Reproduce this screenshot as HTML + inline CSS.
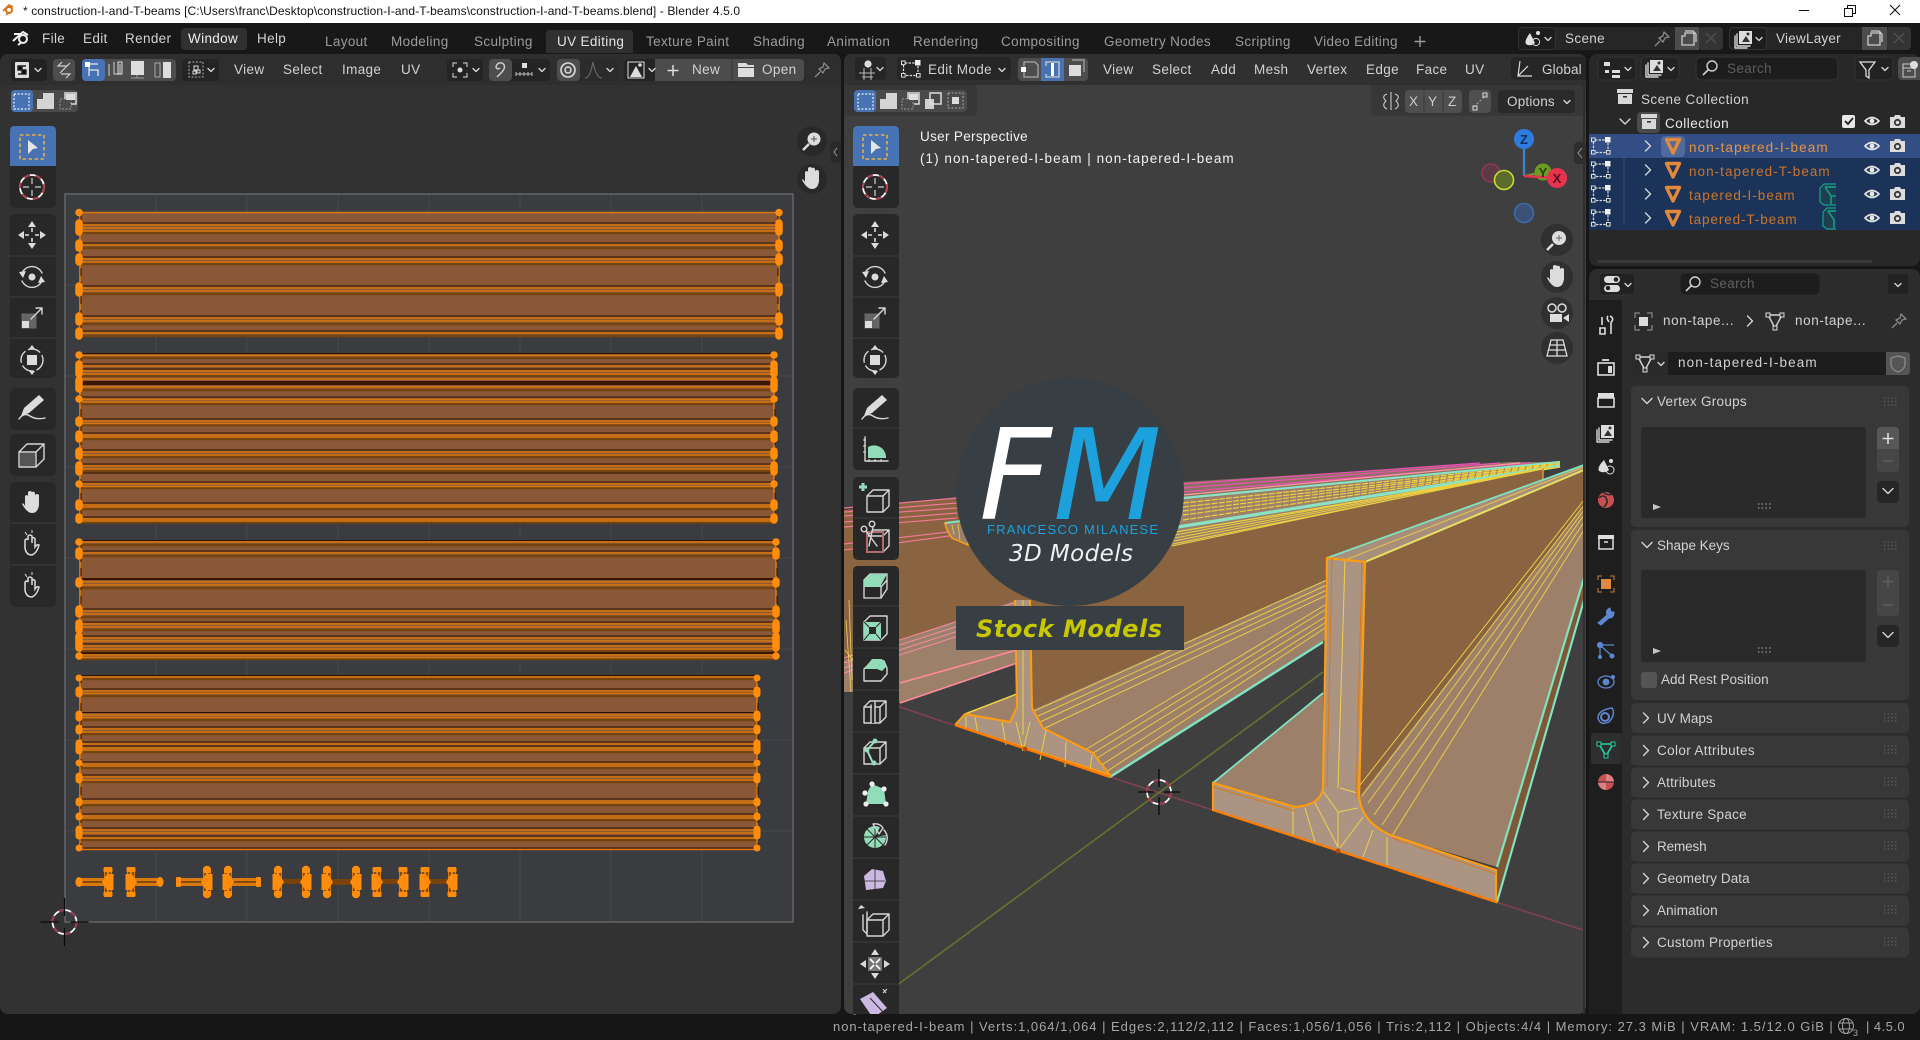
<!DOCTYPE html>
<html><head><meta charset="utf-8"><title>Blender 4.5.0</title>
<style>
html,body{margin:0;padding:0;background:#161616;overflow:hidden}
svg{display:block}
text{font-family:"Liberation Sans",sans-serif;font-size:13.5px;letter-spacing:.35px;fill:#d2d2d2}
.tab{fill:#9c9c9c}
.g{fill:#b8b8b8}
.sm{font-size:13px}
.dv{font-family:"DejaVu Sans",sans-serif;letter-spacing:0}
.ic{fill:none;stroke:#d6d6d6;stroke-width:1.4;stroke-linejoin:round;stroke-linecap:round}
.w{fill:#dcdcdc;stroke:none}
.m{fill:#93dcba;stroke:none}
</style></head><body>
<svg width="1920" height="1040" viewBox="0 0 1920 1040" xmlns="http://www.w3.org/2000/svg">
<defs>
<clipPath id="vp"><rect x="844" y="85" width="741" height="930"/></clipPath>
<clipPath id="tb"><rect x="850" y="120" width="60" height="894"/></clipPath>
<g id="dn"><path d="M-3 -1.5L0 1.5L3 -1.5" class="ic"/></g>
<g id="rt"><path d="M-2.5 -5L2.5 0L-2.5 5" class="ic"/></g>
<g id="dnb"><path d="M-5 -2.5L0 2.5L5 -2.5" class="ic"/></g>
<g id="tri"><path d="M-6.5 -6.5H6.5L0 7Z" fill="none" stroke="#e0893a" stroke-width="3.4" stroke-linejoin="round"/></g>
<g id="eye"><path d="M-7 0Q0 -7 7 0Q0 7 -7 0Z" fill="none" stroke="#e8e8e8" stroke-width="1.6"/><circle r="2.4" fill="#e8e8e8"/></g>
<g id="cam"><path d="M-7 -5H-3L-2 -7H3L4 -5H8V6H-7Z" fill="#dcdcdc"/><circle cx=".5" cy=".5" r="3.6" fill="#333"/><circle cx=".5" cy=".5" r="1.8" fill="#dcdcdc"/></g>
<g id="mode"><path d="M-6 -6H4M-7.5 -4V4M-5 6.5H5M7 -3V4" fill="none" stroke="#dcdcdc" stroke-width="1.2" stroke-dasharray="2.4 1.2"/><rect x="4" y="-9" width="5.5" height="5.5" fill="#f0f0f0"/><rect x="-9.5" y="-8" width="3.6" height="3.6" fill="none" stroke="#dcdcdc" stroke-width="1"/><rect x="-9.5" y="4.5" width="3.6" height="3.6" fill="none" stroke="#dcdcdc" stroke-width="1"/><rect x="5.5" y="4.5" width="3.6" height="3.6" fill="none" stroke="#dcdcdc" stroke-width="1"/></g>
<g id="coll"><rect x="-8" y="-8" width="16" height="4" fill="#d8d8d8"/><path d="M-7 -3H7V7H-7Z" fill="#d8d8d8"/><rect x="-2" y="-1" width="4" height="1.6" fill="#333"/></g>
<g id="meshd"><path d="M-7 -6H7L0 7Z" class="ic"/><rect x="-9" y="-8" width="4" height="4" fill="#333" stroke="#ddd"/><rect x="5" y="-8" width="4" height="4" fill="#333" stroke="#ddd"/><rect x="-2" y="5" width="4" height="4" fill="#333" stroke="#ddd"/></g>
<g id="pin"><path d="M2 -7L7 -2L3 -1L1 3L-3 -1L1 -3ZM-2 2L-7 7" fill="none" stroke="#8a8a8a" stroke-width="1.3" stroke-linejoin="round"/></g>
<g id="search"><circle cx="2" cy="-2" r="5" fill="none" stroke="#cfcfcf" stroke-width="1.4"/><path d="M-1.5 1.5L-7 7" stroke="#cfcfcf" stroke-width="1.6"/></g>
<g id="vlayer"><rect x="-5" y="-8" width="13" height="13" fill="#ddd"/><path d="M-2 3L2 -3L6 3Z" fill="#333"/><circle cx="4" cy="-5" r="1.5" fill="#333"/><path d="M-7 -5V7H6M-9 -3V9H3" class="ic"/></g>
<g id="sel"><rect x="-12" y="-12" width="24" height="24" fill="none" stroke="#e8b04a" stroke-width="1.6" stroke-dasharray="3.5 2.5"/><path d="M-4 -7L6 1L1 2L-4 7Z" fill="#e6e6e6"/></g>
<g id="cur"><circle r="12" fill="none" stroke="#fff" stroke-width="1.8"/><circle r="12" fill="none" stroke="#b03a4a" stroke-width="1.8" stroke-dasharray="6 6"/><path d="M0 -9V-3M0 3V9M-9 0H-3M3 0H9" stroke="#cfcfcf" stroke-width="1.2"/></g>
<g id="move"><path d="M0 -14L-4 -8H4ZM0 14L-4 8H4ZM-14 0L-8 -4V4ZM14 0L8 -4V4Z" class="w"/><path d="M0 -7V-3M0 3V7M-7 0H-3M3 0H7" stroke="#ddd" stroke-width="1.6"/></g>
<g id="rot"><path d="M-10 -4A11 11 0 0 1 10 -4M-10 4A11 11 0 0 0 10 4" class="ic" stroke-width="2"/><path d="M-13 -5L-6 -6L-9 1ZM13 5L6 6L9 -1Z" class="w"/><circle r="3.5" class="w"/></g>
<g id="scl"><rect x="-10" y="-4" width="14" height="14" fill="#d8d8d8" opacity=".35" stroke="#ddd"/><rect x="-10" y="3" width="7" height="7" fill="#ddd"/><path d="M-1 1L10 -10M4 -10H10V-4" class="ic" stroke-width="1.7"/></g>
<g id="xf"><circle r="11" class="ic" stroke-width="2" stroke-dasharray="12 4"/><rect x="-5" y="-5" width="10" height="10" class="w"/><path d="M0 -15L-3 -11H3ZM0 15L-3 11H3Z" class="w"/></g>
<g id="anno"><path d="M-13 10Q-8 3 -2 7T13 9" class="ic" stroke-width="1.2"/><path d="M7 -14L12 -9L-3 4L-11 7L-8 -1Z" class="w"/></g>
<g id="rip"><path d="M-13 -3L-5 -11H12V4L4 12H-13ZM-13 -3H4V12M4 -3L12 -11" class="ic"/><rect x="-12" y="-2" width="15" height="13" fill="#ddd" opacity=".25"/></g>
<g id="hand"><path d="M-7 4V-6Q-5 -8 -4 -6V-1V-10Q-2 -12 0 -10V-1V-10Q2 -11 3 -9V-1V-7Q5 -9 7 -7V3Q6 11 0 11Q-5 11 -10 2Q-9 0 -7 4Z" class="w"/></g>
<g id="handl"><path d="M-7 4V-4Q-5 -6 -4 -4V-8Q-2 -10 0 -8V-1V-6Q2 -7 3 -5V3Q5 0 7 1Q5 9 0 11Q-6 11 -7 4Z" fill="none" stroke="#ddd" stroke-width="1.5"/><path d="M0 -14V-11M-7 -12L-5 -9" stroke="#ddd"/></g>
<g id="ruler"><path d="M-10 -13V11H13" class="ic" stroke-width="2"/><path d="M-7 8V-3A12 12 0 0 1 11 8Z" class="m"/><path d="M-12 -10H-9M-12 -4H-9M-12 2H-9M-6 12V9M0 12V9M6 12V9" stroke="#ddd"/></g>
<g id="cube"><path d="M-11 -5L-5 -11H11V5L5 11H-11ZM-11 -5H5V11M5 -5L11 -11" class="ic"/></g>
<g id="addc"><use href="#cube" x="3" y="3"/><path d="M-12 -15V-7M-16 -11H-8" stroke="#93dcba" stroke-width="3"/></g>
<g id="knife"><use href="#cube" x="3" y="3"/><path d="M-8 -6H8V14H-8Z" fill="none" stroke="#b06a70" stroke-width="2"/><circle cx="-11" cy="-9" r="2.8" class="ic"/><circle cx="-3" cy="-14" r="2.8" class="ic"/><path d="M-9 -7L2 8M-2 -11L-6 8" class="ic"/></g>
<g id="ext"><path d="M-11 -6L-5 -12H12V3L6 12H-11Z" fill="none" stroke="#ddd" stroke-width="1.3"/><path d="M-11 -6L-5 -12H12L6 -1V1H-11Z" class="m"/><path d="M6 1V12M6 1L12 -6" class="ic"/></g>
<g id="inset"><path d="M-11 -6L-5 -12H12V6L6 12H-11Z" class="ic"/><path d="M-11 -6H6V12H-11Z" class="m"/><rect x="-6" y="-1" width="7" height="7" fill="#2a2a2a"/><path d="M-11 -6L-6 -1M6 -6L1 -1M-11 12L-6 6M6 12L1 6" stroke="#2a2a2a"/></g>
<g id="bevel"><path d="M-11 -1L-3 -9L9 -9L12 -2V4L6 11H-11Z" class="ic"/><path d="M-11 -1L-3 -11H7L2 -1Z" class="m"/><path d="M7 -11L12 -4L7 1L2 -1Z" class="m"/></g>
<g id="loop"><use href="#cube"/><path d="M-3 -8V11H0V-10Z" fill="#2a2a2a"/><path d="M-4 -7V11M0 -10V11" class="ic"/></g>
<g id="off"><use href="#cube"/><path d="M0 -12L-8 -3L-2 10" stroke="#9fdcc0" stroke-width="2" fill="none"/><circle cx="0" cy="-12" r="2.5" class="m"/><circle cx="-8" cy="-3" r="2.5" class="m"/><circle cx="-1" cy="10" r="2.5" class="m"/></g>
<g id="poly"><path d="M-7 -4L-3 -11L9 -6L11 9L-9 9Z" class="m"/><circle cx="-3" cy="-11" r="2.6" fill="#eee"/><circle cx="9" cy="-6" r="2.6" fill="#eee"/><circle cx="11" cy="9" r="2.6" fill="#eee"/><circle cx="-9" cy="9" r="2.6" fill="#eee"/><circle cx="-10" cy="-2" r="2.6" fill="#eee"/></g>
<g id="spin"><circle r="11" class="m"/><path d="M0 0L12 -2A13 13 0 0 0 6 -12Z" fill="#2a2a2a"/><path d="M-12 0H12M0 -12V12M-8 -8L8 8M-8 8L8 -8" stroke="#2a2a2a"/><path d="M-2 -13Q5 -14 8 -9L4 -3ZM9 -7Q15 0 10 8" class="ic"/></g>
<g id="smo"><path d="M-11 -3L-3 -10L8 -8L11 2L8 9L-9 11Z" fill="#cdb8e2"/><path d="M-11 2H10M0 -10V11" stroke="#2a2a2a" stroke-width=".8"/></g>
<g id="shr"><use href="#cube" x="3" y="3"/><path d="M-12 -7V8L-8 12M-8 -10V10" class="ic"/><path d="M-14 -17L-17 -13L-10 -14Z" class="w"/></g>
<g id="push"><path d="M0 -15L-4 -9H4ZM0 15L-4 9H4ZM-15 0L-9 -4V4ZM15 0L9 -4V4Z" fill="#d9d9d9"/><rect x="-7" y="-7" width="14" height="14" fill="#777"/><path d="M-5 -5L-1 -1M5 -5L1 -1M-5 5L-1 1M5 5L1 1" stroke="#fff" stroke-width="1.7"/></g>
<g id="shear"><path d="M-15 -7L-2 -14L12 2L-2 12Z" fill="#cdb8e2"/><path d="M-5 -8L8 6" stroke="#2a2a2a"/><path d="M8 -17L11 -13M12 -17L8 -13" stroke="#ddd"/></g>
<g id="half"><rect x="-4" y="-11" width="8" height="22" fill="#d9790e"/><rect x="-4.5" y="-15" width="9" height="5.5" rx="1.5" fill="#ff8c0a"/><rect x="-4.5" y="9.5" width="9" height="5.5" rx="1.5" fill="#ff8c0a"/><path d="M-2 -10V10M2 -10V10" stroke="#4a2204" stroke-width="1.1"/><path d="M-5.5 -8H1L6 0L1 8H-5.5Z" fill="#ff8c0a"/></g>
<g id="half2"><rect x="-4" y="-11" width="8" height="22" fill="#d9790e"/><ellipse cy="-12" rx="4.2" ry="4.2" fill="#ff8c0a"/><ellipse cy="12" rx="4.2" ry="4.2" fill="#ff8c0a"/><path d="M-2 -9V9M2 -9V9" stroke="#4a2204" stroke-width="1.1"/><path d="M-5.5 -8H1L6 0L1 8H-5.5Z" fill="#ff8c0a"/></g>
<g id="dots"><path d="M0 0h14M0 3.5h14M0 7h14" stroke="#5e5e5e" stroke-width="1.3" stroke-dasharray="1.4 2.3"/></g>
<g id="plist"><path d="M0 0L8 3L0 6Z" fill="#c8c8c8"/><path d="M105 0h14M105 4h14" stroke="#9a9a9a" stroke-dasharray="1.4 2.3" stroke-width="1.2"/></g>
</defs>

<!-- window background -->
<rect width="1920" height="1040" fill="#161616"/>
<rect width="1920" height="23" fill="#fff"/>
<circle cx="9" cy="10" r="3" fill="none" stroke="#d8731a" stroke-width="2"/><path d="M3 11L9 5L13 7M6 15L9 12" stroke="#d8731a" stroke-width="1.6" fill="none"/>
<text x="23" y="15" textLength="717" lengthAdjust="spacing" style="fill:#111;font-size:12px;letter-spacing:0">* construction-I-and-T-beams [C:\Users\franc\Desktop\construction-I-and-T-beams\construction-I-and-T-beams.blend] - Blender 4.5.0</text>
<path d="M1799 10.5H1809" stroke="#111"/><path d="M1844.5 8.5h8v8h-8zM1847.5 8.5v-3h8v8h-3" fill="none" stroke="#111"/><path d="M1890 5L1900 15M1900 5L1890 15" stroke="#111" stroke-width="1.1"/>

<!-- topbar -->
<rect y="23" width="1920" height="31" fill="#181818"/>
<g transform="translate(21,38)"><circle cx="2" cy="1" r="4" fill="none" stroke="#eee" stroke-width="2"/><path d="M-8 3L2 -6L7 -3M-7 -4H1M-3 7L1 4" stroke="#eee" stroke-width="2" fill="none"/></g>
<rect x="181" y="28" width="66" height="22" rx="4" fill="#303030"/>
<text x="42" y="43">File</text><text x="83" y="43">Edit</text><text x="125" y="43">Render</text><text x="188" y="43" style="fill:#eee">Window</text><text x="257" y="43">Help</text>
<path d="M546 53V34Q546 30 550 30H629Q633 30 633 34V53Z" fill="#303030"/>
<g class="tab">
<text class="tab" x="325" y="46">Layout</text><text class="tab" x="391" y="46">Modeling</text><text class="tab" x="474" y="46">Sculpting</text><text x="557" y="46" style="fill:#e4e4e4">UV Editing</text><text class="tab" x="646" y="46">Texture Paint</text><text class="tab" x="753" y="46">Shading</text><text class="tab" x="827" y="46">Animation</text><text class="tab" x="913" y="46">Rendering</text><text class="tab" x="1001" y="46">Compositing</text><text class="tab" x="1104" y="46">Geometry Nodes</text><text class="tab" x="1235" y="46">Scripting</text><text class="tab" x="1314" y="46">Video Editing</text>
</g>
<path d="M1420 36V47M1414.5 41.5H1425.5" stroke="#9a9a9a" stroke-width="1.4"/>
<!-- scene selectors -->
<rect x="1518" y="27" width="205" height="23" rx="4" fill="#262626"/>
<rect x="1518.5" y="27.5" width="37" height="22" rx="4" fill="#1d1d1d" stroke="#333"/>
<path d="M1530 33L1535 43Q1530 47 1526 44Q1524 41 1530 33Z" fill="#e2e2e2"/><circle cx="1538" cy="33" r="2" fill="#e2e2e2"/><circle cx="1536" cy="42" r="3.6" fill="none" stroke="#ddd"/><use href="#dn" x="1548" y="39"/>
<text x="1565" y="43">Scene</text>
<use href="#pin" x="1662" y="39"/>
<rect x="1675" y="27" width="24" height="23" fill="#4c4c4c"/><path d="M1682 36V45H1694V33H1685V36ZM1685 31H1693L1696 34V42" fill="none" stroke="#ccc" stroke-width="1.3"/>
<rect x="1699" y="27" width="24" height="23" rx="4" fill="#343434"/><path d="M1706 33L1716 43M1716 33L1706 43" stroke="#4c4c4c" stroke-width="1.6"/>
<rect x="1729" y="27" width="182" height="23" rx="4" fill="#262626"/>
<rect x="1729.5" y="27.5" width="37" height="22" rx="4" fill="#1d1d1d" stroke="#333"/>
<use href="#vlayer" x="1744" y="39"/><use href="#dn" x="1759" y="39"/>
<text x="1776" y="43" textLength="65">ViewLayer</text>
<rect x="1862" y="27" width="25" height="23" fill="#4c4c4c"/><path d="M1868 36V45H1880V33H1871V36ZM1871 31H1879L1882 34V42" fill="none" stroke="#ccc" stroke-width="1.3"/>
<rect x="1887" y="27" width="24" height="23" rx="4" fill="#343434"/><path d="M1894 33L1904 43M1904 33L1894 43" stroke="#4c4c4c" stroke-width="1.6"/>

<!-- UV editor -->
<rect x="0" y="54" width="841" height="960" rx="8" fill="#323232"/>
<path d="M0 85V62Q0 54 8 54H833Q841 54 841 62V85Z" fill="#2e2e2e"/>
<rect x="65" y="194" width="728" height="728" fill="#3a3c40"/>
<path d="M156 194V922M247 194V922M338 194V922M429 194V922M520 194V922M611 194V922M702 194V922M65 285H793M65 376H793M65 467H793M65 558H793M65 649H793M65 740H793M65 831H793" stroke="#46484c" stroke-width="1"/>
<rect x="65" y="194" width="728" height="728" fill="none" stroke="#6e7072" stroke-width="1.2"/>

<!-- islands -->
<rect x="79" y="212" width="700" height="124" fill="#8a5836"/>
<rect x="79" y="353" width="695" height="170" fill="#8a5836"/>
<rect x="79" y="540" width="697" height="119" fill="#8a5836"/>
<rect x="79" y="675" width="678" height="175" fill="#8a5836"/>
<g fill="none">
<path stroke="#74430f" stroke-width="2.4" d="M79 233H779M79 248H779M79 264H779M79 294H779M79 324H779M79 336H779"/>
<path stroke="#d8760e" stroke-width="1.4" d="M79 212.5H779M79 225H779M79 228H779M79 231H779M79 245H779M79 259H779M79 262H779M79 288H779M79 291H779M79 318H779M79 321H779M79 333H779"/>
<path stroke="#2e0f00" stroke-width="1.1" d="M79 223H779M79 243H779M79 257H779M79 286H779M79 316H779M79 331H779"/>

<path stroke="#74430f" stroke-width="2.4" d="M79 358H774M79 376H774M79 390H774M79 404H774M79 425H774M79 439H774M79 457H774M79 471H774M79 488H774M79 509H774M79 522.5H774"/>
<path stroke="#d8760e" stroke-width="1.4" d="M79 355.5H774M79 366H774M79 371H774M79 374H774M79 379H774M79 387H774M79 399.5H774M79 402H774M79 421H774M79 423.5H774M79 435H774M79 437H774M79 452H774M79 455H774M79 466H774M79 469H774M79 484H774M79 486.5H774M79 505H774M79 507H774M79 519H774M79 521H774"/>
<path stroke="#2e0f00" stroke-width="1.1" d="M79 353.5H774M79 364H774M79 369H774M79 397H774M79 419H774M79 433H774M79 450H774M79 464H774M79 473H774M79 482H774M79 503H774M79 517H774"/>
<path stroke="#3a1500" stroke-width="4" d="M79 383H774"/>

<path stroke="#74430f" stroke-width="2.4" d="M79 545H776M79 556H776M79 588H776M79 617H776M79 630H776M79 651H776M79 659H776"/>
<path stroke="#d8760e" stroke-width="1.4" d="M79 542H776M79 553H776M79 582H776M79 585H776M79 611H776M79 614H776M79 624H776M79 627H776M79 638H776M79 641H776M79 646H776M79 649H776M79 655H776M79 657.5H776"/>
<path stroke="#2e0f00" stroke-width="1.1" d="M79 540.5H776M79 551H776M79 609H776M79 622H776M79 636H776M79 644H776"/>
<path stroke="#3a1500" stroke-width="2" d="M79 579H776M79 653H776"/>

<path stroke="#74430f" stroke-width="2.4" d="M79 679H757M79 696H757M79 720H757M79 734H757M79 752H757M79 768H757M79 782H757M79 805H757M79 820H757M79 840H757"/>
<path stroke="#d8760e" stroke-width="1.4" d="M79 677H757M79 691H757M79 693.5H757M79 715H757M79 717.5H757M79 729H757M79 732H757M79 744H757M79 748H757M79 750H757M79 764H757M79 766H757M79 777H757M79 780H757M79 801H757M79 803H757M79 816H757M79 818H757M79 830H757M79 833H757M79 838H757M79 849.5H757"/>
<path stroke="#2e0f00" stroke-width="1.1" d="M79 675.5H757M79 689H757M79 712.5H757M79 727H757M79 742H757M79 746H757M79 762H757M79 775H757M79 799H757M79 814H757M79 828H757M79 836H757M79 848H757"/>

<!-- vertical edges -->
<path stroke="#d9790e" stroke-width="1.6" d="M80 212V336M779 212V336M80 353V523M774 353V523M80 540V659M776 540V659M80 675V850M757 675V850"/>
<path stroke="#2e0f00" stroke-width="1" d="M81 212V336M778 212V336M81 353V523M775 353V523M81 540V659M777 540V659M81 675V850M758 675V850" stroke-dasharray="8 6"/>
<g stroke="#ff8c0a" stroke-width="7.5" stroke-linecap="round">
<path d="M79 212.5v.01M79 223v9M79 243v5M79 257v5M79 286v7M79 316v6M79 331v5"/>
<path d="M779 212.5v.01M779 223v9M779 243v5M779 257v5M779 286v7M779 316v6M779 331v5"/>
<path d="M79 355v.01M79 364v10M79 380v9M79 399v.01M79 420v3M79 434v5M79 451v5M79 465v7M79 484v.01M79 503v4M79 517v3"/>
<path d="M774 355v.01M774 364v10M774 380v9M774 399v.01M774 420v3M774 434v5M774 451v5M774 465v7M774 484v.01M774 503v4M774 517v3"/>
<path d="M79 542v.01M79 551v5M79 581v3M79 609v5M79 623v7M79 636v12M79 656v.01"/>
<path d="M776 542v.01M776 551v5M776 581v3M776 609v5M776 623v7M776 636v12M776 656v.01"/>
<path d="M79 678v.01M79 690v4M79 714v4M79 728v3M79 743v8M79 763v.01M79 776v4M79 801v2M79 816v1M79 829v7M79 848v.01" stroke-width="7"/>
<path d="M757 678v.01M757 690v4M757 714v4M757 728v3M757 743v8M757 763v.01M757 776v4M757 801v2M757 816v1M757 829v7M757 848v.01" stroke-width="7"/>
</g>
</g>
<!-- small islands -->
<g>
<path d="M79 878H108v8H79zM131 878H160v8H131zM178 878H207v8H178zM228 878H258v8H228z" fill="#d9790e"/>
<path d="M79 882H108M131 882H160M178 882H207M228 882H258" stroke="#6b3a08" stroke-width="1.6"/>
<ellipse cx="79" cy="882" rx="3.6" ry="5" fill="#ff8c0a"/><ellipse cx="160" cy="882" rx="3.6" ry="5" fill="#ff8c0a"/><rect x="176" y="877" width="5" height="10" rx="1" fill="#ff8c0a"/><rect x="256" y="877" width="5" height="10" rx="1" fill="#ff8c0a"/>
<use href="#half" transform="translate(108,882) scale(-1,1)"/><use href="#half" x="131" y="882"/>
<use href="#half2" transform="translate(207,882) scale(-1,1)"/><use href="#half2" x="228" y="882"/>
<path d="M278 879H306v5H278zM327 879H356v6H327zM377 879H403v5H377zM425 879H452v5H425z" fill="#7a4208"/>
<use href="#half2" x="278" y="882"/><use href="#half2" transform="translate(306,882) scale(-1,1)"/>
<use href="#half2" x="327" y="882"/><use href="#half2" transform="translate(356,882) scale(-1,1)"/>
<use href="#half" x="377" y="882"/><use href="#half" transform="translate(403,882) scale(-1,1)"/>
<use href="#half" x="425" y="882"/><use href="#half" transform="translate(452,882) scale(-1,1)"/>
</g>
<!-- uv cursor -->
<g transform="translate(64.5,922)"><circle r="12" fill="none" stroke="#fff" stroke-width="1.7"/><circle r="12" fill="none" stroke="#a8304a" stroke-width="1.7" stroke-dasharray="6.3 6.3"/><path d="M0 -24V-6M0 6V24M-24 0H-6M6 0H24" stroke="#0a0a0a" stroke-width="1.3"/></g>

<!-- UV header widgets -->
<rect x="11" y="59" width="36" height="22" rx="4" fill="#222"/>
<g transform="translate(22,70)"><rect x="-7" y="-8" width="14" height="16" rx="1" fill="#ddd"/><path d="M-4 -4H0V0H-4ZM0 0H4V4H0ZM0 -4H4M-4 4H0" stroke="#222" stroke-width="1.4"/></g><use href="#dn" x="38" y="70"/>
<rect x="53" y="59" width="22" height="22" rx="4" fill="#4d4d4d"/><path d="M60 73L70 63M62 62L58 66L67 66M66 78L70 74L61 74" fill="none" stroke="#d0d0d0" stroke-width="1.2"/>
<rect x="82" y="59" width="94" height="22" rx="4" fill="#4d4d4d"/><rect x="82" y="59" width="23" height="22" rx="4" fill="#4772b3"/>
<path d="M89 64V76M89 64H98M89 70H98V76" fill="none" stroke="#e8e8e8" stroke-width="1.2"/><rect x="85" y="62" width="5" height="5" fill="#fff"/>
<path d="M109 64V76M114 62V74H120V64" fill="none" stroke="#bbb" stroke-width="1.2"/><rect x="118" y="62" width="4" height="12" fill="none" stroke="#ddd"/>
<rect x="131" y="61" width="13" height="14" fill="#ddd"/><path d="M137 75V78M131 78H144" stroke="#999"/>
<path d="M155 63V77M155 63H160V77H155" fill="none" stroke="#aaa"/><rect x="163" y="62" width="8" height="16" fill="#ddd"/>
<rect x="182" y="59" width="37" height="22" rx="4" fill="#242424"/>
<rect x="189" y="62" width="14" height="15" fill="none" stroke="#aaa" stroke-dasharray="2 1.5"/><path d="M194 66h4v4h-4zM197 70h3v3h-3zM193 71h3v3h-3z" fill="none" stroke="#ddd"/><use href="#dn" x="211" y="70"/>
<text x="234" y="74">View</text><text x="283" y="74">Select</text><text x="342" y="74">Image</text><text x="401" y="74">UV</text>
<rect x="447" y="59" width="36" height="22" rx="4" fill="#242424"/><circle cx="460" cy="70" r="2.5" fill="#ddd"/><path d="M453 67V63H457M463 63H467V67M453 73V77H457M463 77H467V73" fill="none" stroke="#bbb" stroke-width="1.2"/><use href="#dn" x="476" y="70"/>
<rect x="489" y="59" width="61" height="22" rx="4" fill="#242424"/><rect x="489" y="59" width="23" height="22" rx="4" fill="#4d4d4d"/>
<path d="M497 77L502 72Q507 66 502 63Q497 62 496 67Q497 70 500 68" fill="none" stroke="#ccc" stroke-width="1.5"/>
<path d="M516 76V72M520 76V72M524 76V72M528 76V72M532 76V72M516 74H532" stroke="#bbb"/><rect x="522" y="63" width="5" height="5" fill="#ddd"/><use href="#dn" x="542" y="70"/>
<rect x="557" y="59" width="61" height="22" rx="4" fill="#2b2b2b"/><rect x="557" y="59" width="23" height="22" rx="4" fill="#4d4d4d"/>
<circle cx="568" cy="70" r="7" fill="none" stroke="#e0e0e0" stroke-width="1.6"/><circle cx="568" cy="70" r="3" fill="none" stroke="#e0e0e0" stroke-width="1.4"/><path d="M585 78Q590 78 593 62Q596 78 602 78" fill="none" stroke="#666" stroke-width="1.2"/><use href="#dn" x="610" y="70"/>
<rect x="624" y="59" width="180" height="22" rx="4" fill="#4c4c4c"/><path d="M628 59H655V81H628Q624 81 624 77V63Q624 59 628 59Z" fill="#242424"/>
<rect x="628" y="62" width="16" height="16" fill="none" stroke="#ddd"/><path d="M630 77L636 66L642 77Z" fill="#ddd"/><circle cx="640" cy="65" r="1.8" fill="#ddd"/><use href="#dn" x="652" y="70"/>
<path d="M673 65V76M667.5 70.5H678.5" stroke="#ddd" stroke-width="1.5"/>
<text x="692" y="74">New</text>
<path d="M732 59V81" stroke="#333"/>
<path d="M738 63H746L748 65H754V67H738Z" fill="#ddd"/><path d="M738 68H754V77H738Z" fill="#ddd"/>
<text x="762" y="74">Open</text>
<use href="#pin" x="822" y="70"/>
<!-- UV 2nd row -->
<rect x="11" y="90" width="67" height="22" rx="4" fill="#4a4a4a"/><rect x="11" y="90" width="22" height="22" rx="4" fill="#4772b3"/>
<rect x="14" y="94" width="15" height="15" fill="none" stroke="#f0f0f0" stroke-dasharray="2 1.6" stroke-width="1.2"/>
<path d="M37 109V99H43V93H54V109Z" fill="#d4d4d4"/>
<rect x="60" y="99" width="11" height="10" fill="none" stroke="#999" stroke-dasharray="2 1.5"/><path d="M65 99V93H76V104H71" fill="none" stroke="#ddd" stroke-width="1.5"/><path d="M66 94H75V100H66Z" fill="#ddd"/>
<!-- UV toolbar -->
<g>
<rect x="10" y="126" width="46" height="82" rx="5" fill="#282828"/>
<path d="M10 166V131Q10 126 15 126H51Q56 126 56 131V166Z" fill="#4772b3"/>
<use href="#sel" x="32" y="147"/><use href="#cur" x="32" y="187"/>
<rect x="10" y="214" width="46" height="164" rx="5" fill="#282828"/>
<path d="M10 256H56M10 297H56M10 338H56" stroke="#3c3c3c"/>
<use href="#move" x="32" y="235"/><use href="#rot" x="32" y="277"/><use href="#scl" x="32" y="318"/><use href="#xf" x="32" y="360"/>
<rect x="10" y="388" width="46" height="42" rx="5" fill="#282828"/><use href="#anno" x="32" y="409"/>
<rect x="10" y="434" width="46" height="42" rx="5" fill="#282828"/><use href="#rip" x="32" y="455"/>
<rect x="10" y="482" width="46" height="125" rx="5" fill="#282828"/>
<path d="M10 523H56M10 565H56" stroke="#3c3c3c"/>
<use href="#hand" x="32" y="502"/><use href="#handl" x="32" y="544"/><use href="#handl" x="32" y="586"/>
</g>
<!-- UV nav -->
<circle cx="812" cy="141" r="15" fill="#292929"/><circle cx="814" cy="139" r="6.5" fill="#ddd"/><path d="M809 144L803 150" stroke="#ddd" stroke-width="2.5"/><path d="M814 136V142M811 139H817" stroke="#555"/>
<circle cx="812" cy="179" r="15" fill="#292929"/><use href="#hand" x="812" y="178"/>
<rect x="830" y="141" width="11" height="22" rx="4" fill="#2a2a2a"/><path d="M837 148L834 152L837 156" fill="none" stroke="#999"/>

<!-- 3D viewport -->
<rect x="844" y="54" width="742" height="960" rx="8" fill="#3f3f3f"/>
<path d="M844 85V62Q844 54 852 54H1578Q1586 54 1586 62V85Z" fill="#303030"/>
<path d="M844 85H977V111Q977 116 972 116H844Z" fill="#373737"/>
<path d="M1371 85H1586V116H1376Q1371 116 1371 111Z" fill="#373737"/>
<g clip-path="url(#vp)" fill="none">
<!-- axes -->
<path d="M844 688L953 725M1110 777L1213 810M1496 902L1586 931" stroke="#80404f" stroke-width="1.6"/>
<path d="M900 983L1323 672" stroke="#66722f" stroke-width="1.6"/>
<path d="M844 1022L900 983" stroke="#66722f" stroke-width="1.6"/>
<!-- far beam left -->
<path d="M844 510L960 497L1030 490V640L844 690Z" fill="#8a6340"/>
<path d="M844 660L1017 600V663L900 703L853 692H844Z" fill="#9c806a"/>
<path d="M844 508L957 498M844 512L957 503M844 516L957 508M844 522L957 513M844 527L957 518M844 544L957 531M844 550L957 535" stroke="#f07898" stroke-width="1.2"/>
<path d="M844 658L1017 602M844 663L1017 607M844 668L1017 612M844 673L1017 617" stroke="#f08aa0" stroke-width="1.1"/>
<path d="M900 683L1017 650M900 703L1017 663" stroke="#ff8a9a" stroke-width="1.6"/>
<path d="M846 620L851 692M849 600L852 680M845 650L853 660" stroke="#f0d060" stroke-width=".8"/>
<!-- top flange far -->
<path d="M1100 505L1510 462L1560 462L1560 466L1172 546L1100 560Z" fill="#9c806a"/>
<path d="M1183 482L1510 462L1560 462L1183 498Z" fill="#8c7260"/>
<path d="M1183 484L1480 463M1183 488L1500 463M1183 492L1530 463" stroke="#ee4fb5" stroke-width="1.2"/>
<path d="M1183 495L1520 463" stroke="#ff9aa0" stroke-width="1.2"/>
<path d="M1183 498L1560 462" stroke="#88e4c4" stroke-width="2.2"/>
<path d="M1183 503L1560 463M1183 507L1560 464M1183 511L1560 464M1183 515L1560 465M1183 520L1560 465" stroke="#ecd040" stroke-width="1.2" stroke-dasharray="6 1.2"/>
<path d="M1178 527L1560 466" stroke="#88e4c4" stroke-width="3.2"/>
<path d="M1176 532L1560 467" stroke="#ecd040" stroke-width="1.2"/>
<!-- I-beam web side -->
<path d="M1030 576L1172 546L1543 468V483L1327 558L1325 580L1032 710Z" fill="#8a6340"/>
<path d="M1175 535L1550 467M1175 538L1550 467M1174 541L1550 467M1173 544L1548 468M1172 546L1543 468" stroke="#ecd040" stroke-width="1"/>
<path d="M1543 468V481" stroke="#e0a030" stroke-width="1.4"/>
<!-- I flange right -->
<path d="M1032 710L1325 580V640L1110 777L1093 753L1043 728Z" fill="#9c806a"/>
<path d="M1032 712L1327 580M1036 717L1327 585M1040 722L1327 590M1045 728L1327 595" stroke="#eccb44" stroke-width="1"/>
<path d="M1085 750L1325 605M1090 755L1325 610M1094 760L1325 617M1100 766L1325 623M1106 772L1325 628" stroke="#eccb44" stroke-width="1"/>
<path d="M1110 777L1323 642" stroke="#7fe2c0" stroke-width="2.4"/>
<!-- I front -->
<path d="M955 725L965 714L1010 722L1017 707L1015 600H1030L1032 708L1043 728L1093 753L1110 775Z" fill="#ac9482"/>
<path d="M965 714L1017 695V707L1010 722Z" fill="#9c806a"/>
<path d="M965 714L1017 694" stroke="#ecd040" stroke-width="1.6"/>
<path d="M955 725L965 714L1010 722L1017 707L1015 600M1030 600L1032 708L1043 728L1093 753L1110 775L955 725" stroke="#ff9d10" stroke-width="2"/>
<path d="M1023 600L1023 735M966 716L966 730M975 717L978 734M1002 722L1006 745M1016 722L1023 751M1030 722L1023 751M1046 730L1040 760M1066 742L1065 767M1092 755L1090 770" stroke="#ecd040" stroke-width="1"/>
<path d="M955 725L1110 777" stroke="#ff7a00" stroke-width="2.4"/>
<circle cx="1025" cy="749" r="2.4" fill="#b5490f"/>
<path d="M945 523L968 521L968 545L952 538Q946 530 945 523Z" fill="#9c806a" stroke="#ff9d10" stroke-width="1.6"/>
<path d="M945 523L968 520" stroke="#7fe2c0" stroke-width="2"/>
<path d="M952 525L954 535M958 524L960 540" stroke="#ecd040" stroke-width=".8"/>
<!-- T beam -->
<path d="M1365 562L1584 470V505L1359 797Z" fill="#8a6340"/>
<path d="M1359 797L1584 505V577L1497 867L1390 835L1362 822Z" fill="#9c806a"/>
<path d="M1357 789L1584 500M1362 796L1584 505M1368 803L1584 510M1374 815L1584 515M1382 825L1584 522M1392 836L1584 530" stroke="#eccb44" stroke-width="1"/>
<path d="M1497 867L1584 578V600L1497 902Z" fill="#7d5736"/>
<path d="M1497 867L1584 578M1497 902L1584 600" stroke="#7fe2c0" stroke-width="2.2"/>
<path d="M1213 783L1323 693V790L1322 805L1295 807Z" fill="#9c806a"/>
<path d="M1213 783L1323 693" stroke="#7fe2c0" stroke-width="1.8"/>
<path d="M1327 558L1365 562L1584 470V465Z" fill="#a88f7c"/>
<path d="M1327 558L1584 465" stroke="#7fe2c0" stroke-width="1.8"/><path d="M1365 562L1584 470" stroke="#e8e060" stroke-width="2"/><path d="M1345 560L1584 467" stroke="#eccb44" stroke-width=".9"/>
<path d="M1213 783L1295 807Q1322 805 1323 787L1327 558L1365 562L1359 797Q1362 822 1390 835L1496 870V902L1213 810Z" fill="#ac9482"/>
<path d="M1293 808V835M1305 808L1315 842M1315 803L1338 847M1322 790L1338 812V848M1338 812L1358 808M1340 788L1357 793M1363 817L1340 848M1373 830L1363 857M1387 837V865M1345 560L1338 788" stroke="#f0d04a" stroke-width="1"/>
<path d="M1213 783L1295 807Q1322 805 1323 787L1327 558L1365 562L1359 797Q1362 822 1390 835L1496 870V902L1213 810Z" stroke="#ff9d10" stroke-width="2.2"/>
<path d="M1213 787L1295 811M1362 562L1356 797M1332 558L1327 787M1392 838L1496 874" stroke="#d8781a" stroke-width="1"/>
<path d="M1213 810L1496 902" stroke="#ff7a00" stroke-width="2.2"/>
<circle cx="1338" cy="851" r="2.4" fill="#b5490f"/>
<!-- 3D cursor -->
<g transform="translate(1159,792)"><circle r="12" stroke="#fff" stroke-width="1.7"/><circle r="12" stroke="#a8304a" stroke-width="1.7" stroke-dasharray="6.3 6.3"/><path d="M0 -23V-5M0 5V23M-21 0H-5M5 0H21" stroke="#0a0a0a" stroke-width="1.3"/></g>
<path d="M1584 85V1014" stroke="#2e2e2e" stroke-width="2"/>
</g>

<!-- logo -->
<g>
<circle cx="1070" cy="492" r="114" fill="#373f44"/>
<rect x="956" y="606" width="228" height="44" fill="#373f44"/>
<text class="dv" x="979" y="519" style="font-size:126px;font-style:italic;fill:#fff">F</text>
<text class="dv" x="1053" y="519" style="font-size:126px;font-style:italic;fill:#1ca1dc">M</text>
<text x="987" y="534" textLength="171" style="font-size:13px;letter-spacing:0;fill:#1ca1dc">FRANCESCO MILANESE</text>
<text class="dv" x="1009" y="561" textLength="124" style="font-size:23px;font-style:italic;fill:#f0f0f0">3D Models</text>
<text class="dv" x="976" y="637" textLength="186" style="font-size:24px;font-style:italic;font-weight:bold;fill:#c8c800">Stock Models</text>
</g>

<!-- viewport text -->
<text x="920" y="141" textLength="108" style="fill:#f2f2f2">User Perspective</text>
<text x="920" y="163" textLength="314" style="fill:#f2f2f2">(1) non-tapered-I-beam | non-tapered-I-beam</text>

<!-- 3D header -->
<rect x="855" y="57" width="31" height="23" rx="4" fill="#262626"/>
<circle cx="868" cy="64" r="3.6" fill="#ddd"/><path d="M859 73H875M862 77H873M864 68V80M871 68V80" stroke="#bbb"/><use href="#dn" x="880" y="69"/>
<rect x="897" y="57" width="114" height="23" rx="4" fill="#262626"/>
<use href="#mode" x="911" y="69"/>
<text x="928" y="74">Edit Mode</text><use href="#dn" x="1002" y="70"/>
<rect x="1018" y="58" width="70" height="23" rx="4" fill="#4d4d4d"/><rect x="1041" y="58" width="23" height="23" fill="#4772b3"/>
<path d="M1024 62H1035L1038 65V77H1024Z" fill="none" stroke="#aaa" stroke-width="1.3"/><rect x="1021" y="67" width="5" height="5" fill="#fff"/>
<path d="M1046 66V62H1059V77H1046V74" fill="none" stroke="#ccc" stroke-width="1.3"/><rect x="1051" y="63" width="3" height="13" fill="#fff"/>
<path d="M1069 65H1081V76H1069Z" fill="#dcdcdc"/><path d="M1072 60H1084V72" fill="none" stroke="#aaa" stroke-width="1.2"/>
<text x="1103" y="74">View</text><text x="1152" y="74">Select</text><text x="1211" y="74">Add</text><text x="1254" y="74">Mesh</text><text x="1307" y="74">Vertex</text><text x="1366" y="74">Edge</text><text x="1416" y="74">Face</text><text x="1465" y="74">UV</text>
<path d="M1517 57H1586V80H1517Q1511 80 1511 75V62Q1511 57 1517 57Z" fill="#262626"/>
<path d="M1520 61L1518 76H1532M1518 76L1528 66" fill="none" stroke="#ddd" stroke-width="1.2"/>
<text x="1542" y="74" textLength="40">Global</text>
<!-- 3D 2nd row -->
<rect x="854" y="90" width="113" height="22" rx="4" fill="#4a4a4a"/><rect x="854" y="90" width="22" height="22" rx="4" fill="#4772b3"/>
<rect x="858" y="94" width="15" height="15" fill="none" stroke="#f0f0f0" stroke-dasharray="2 1.6" stroke-width="1.2"/>
<path d="M880 109V99H886V93H897V109Z" fill="#d4d4d4"/>
<rect x="902" y="99" width="11" height="10" fill="none" stroke="#999" stroke-dasharray="2 1.5"/><path d="M908 99V93H919V104H914" fill="none" stroke="#ddd" stroke-width="1.5"/><path d="M909 94H918V100H909Z" fill="#ddd"/>
<path d="M925 99H934V109H925Z" fill="#d0d0d0"/><rect x="930" y="93" width="11" height="11" fill="none" stroke="#ddd" stroke-width="1.5"/>
<rect x="948" y="93" width="15" height="15" fill="none" stroke="#aaa" stroke-dasharray="2 1.6"/><rect x="952" y="97" width="7" height="7" fill="#ddd"/>
<path d="M1387 94Q1381 96 1386 101Q1381 106 1387 109M1395 94Q1401 96 1396 101Q1401 106 1395 109M1391 92V110" fill="none" stroke="#c8c8c8" stroke-width="1.1"/>
<rect x="1405" y="90" width="57" height="23" rx="4" fill="#4f4f4f"/><path d="M1424 90V113M1443 90V113" stroke="#3a3a3a"/>
<text x="1409" y="106" style="fill:#ccc">X</text><text x="1428" y="106" style="fill:#ccc">Y</text><text x="1448" y="106" style="fill:#ccc">Z</text>
<rect x="1469" y="90" width="22" height="23" rx="4" fill="#4f4f4f"/><path d="M1474 107L1486 95" stroke="#aaa" stroke-dasharray="2 2"/><rect x="1483" y="93" width="4" height="4" fill="none" stroke="#ddd"/><rect x="1473" y="106" width="4" height="4" fill="none" stroke="#ddd"/>
<rect x="1498" y="90" width="77" height="23" rx="4" fill="#2a2a2a"/>
<text x="1507" y="106" textLength="48">Options</text><use href="#dn" x="1567" y="102"/>
<!-- tools 3d -->
<g>
<rect x="853" y="126" width="46" height="82" rx="5" fill="#282828"/>
<path d="M853 166V131Q853 126 858 126H894Q899 126 899 131V166Z" fill="#4772b3"/>
<use href="#sel" x="875" y="147"/><use href="#cur" x="875" y="187"/>
<rect x="853" y="214" width="46" height="164" rx="5" fill="#282828"/>
<path d="M853 256H899M853 297H899M853 338H899" stroke="#3c3c3c"/>
<use href="#move" x="875" y="235"/><use href="#rot" x="875" y="277"/><use href="#scl" x="875" y="318"/><use href="#xf" x="875" y="360"/>
<rect x="853" y="388" width="46" height="82" rx="5" fill="#282828"/><path d="M853 428H899" stroke="#3c3c3c"/>
<use href="#anno" x="875" y="409"/><use href="#ruler" x="875" y="450"/>
<rect x="853" y="477" width="46" height="83" rx="5" fill="#282828"/><path d="M853 518H899" stroke="#3c3c3c"/>
<use href="#addc" x="875" y="498"/><use href="#knife" x="875" y="538"/>
<path d="M853 1014V571Q853 566 858 566H894Q899 566 899 571V1014Z" fill="#282828"/>
<path d="M853 606H899M853 648H899M853 690H899M853 732H899M853 774H899M853 816H899M853 858H899M853 900H899M853 942H899M853 984H899" stroke="#3c3c3c"/>
<use href="#ext" x="875" y="586"/><use href="#inset" x="875" y="628"/><use href="#bevel" x="875" y="670"/><use href="#loop" x="875" y="712"/><use href="#off" x="875" y="753"/><use href="#poly" x="875" y="795"/><use href="#spin" x="875" y="837"/><use href="#smo" x="875" y="879"/><use href="#shr" x="875" y="922"/><use href="#push" x="875" y="964"/>
<g clip-path="url(#tb)"><use href="#shear" x="875" y="1006"/></g>
</g>
<!-- gizmo -->
<circle cx="1491" cy="173" r="9" fill="#5a3a44" stroke="#94384c" stroke-width="1.6"/>
<circle cx="1524" cy="213" r="9.5" fill="#3a5276" stroke="#3a6cb0" stroke-width="1.6"/>
<path d="M1524 139V176" stroke="#3d80d0" stroke-width="2.4"/>
<path d="M1524 176L1543 172" stroke="#6c9b22" stroke-width="2"/>
<circle cx="1504" cy="180" r="9.5" fill="#5b6b2c" stroke="#c8dc30" stroke-width="1.6"/>
<circle cx="1524" cy="139" r="10" fill="#2f7cdc"/>
<circle cx="1543" cy="172" r="8.5" fill="#6c9b22"/>
<path d="M1524 176L1557 178" stroke="#e8334f" stroke-width="2.4"/>
<circle cx="1557" cy="178" r="10" fill="#e8334f"/>
<text x="1524" y="144" text-anchor="middle" style="font-size:13px;font-weight:bold;fill:#103060;letter-spacing:0">Z</text>
<text x="1543" y="177" text-anchor="middle" style="font-size:13px;font-weight:bold;fill:#28400a;letter-spacing:0">Y</text>
<text x="1557" y="183" text-anchor="middle" style="font-size:13px;font-weight:bold;fill:#5a0a18;letter-spacing:0">X</text>
<circle cx="1557" cy="240" r="16" fill="#303030"/><circle cx="1559" cy="238" r="7" fill="#ddd"/><path d="M1553 244L1547 250" stroke="#ddd" stroke-width="2.6"/><path d="M1559 235V241M1556 238H1562" stroke="#666"/>
<circle cx="1557" cy="277" r="16" fill="#303030"/><use href="#hand" x="1557" y="276"/>
<circle cx="1557" cy="313" r="16" fill="#303030"/><circle cx="1552" cy="308" r="4" fill="none" stroke="#ddd" stroke-width="1.5"/><circle cx="1562" cy="308" r="4" fill="none" stroke="#ddd" stroke-width="1.5"/><rect x="1550" y="314" width="12" height="8" fill="#ddd"/><path d="M1563 318L1569 314V322Z" fill="#ddd"/>
<circle cx="1557" cy="348" r="16" fill="#303030"/><path d="M1551 340H1563L1567 356H1547ZM1557 340V356M1549 345H1565M1548 350H1566" fill="none" stroke="#ddd" stroke-width="1.3"/>
<rect x="1574" y="142" width="12" height="22" rx="4" fill="#2e2e2e"/><path d="M1582 148L1578 153L1582 158" fill="none" stroke="#999"/>

<!-- outliner -->
<rect x="1589" y="54" width="331" height="212" rx="8" fill="#282828"/>
<rect x="1598" y="57" width="38" height="23" rx="4" fill="#222" stroke="#333"/>
<path d="M1604 62h6v4h-6zM1605 70h4v3h-4zM1612 70h8v3h-8zM1612 75h8v3h-8zM1606 66v10" fill="#ddd" stroke="none"/><use href="#dn" x="1628" y="69"/>
<rect x="1641" y="57" width="38" height="23" rx="4" fill="#222" stroke="#333"/><use href="#vlayer" x="1655" y="68"/><use href="#dn" x="1671" y="69"/>
<rect x="1696" y="57" width="142" height="23" rx="5" fill="#1d1d1d" stroke="#333"/><use href="#search" x="1710" y="68"/>
<text x="1727" y="73" style="fill:#5e5e5e">Search</text>
<rect x="1855" y="57" width="38" height="23" rx="4" fill="#222" stroke="#333"/><path d="M1860 62H1875L1869 70V78L1866 76V70Z" fill="none" stroke="#ddd" stroke-width="1.3"/><use href="#dn" x="1885" y="69"/>
<path d="M1920 57H1903Q1898 57 1898 62V75Q1898 80 1903 80H1920Z" fill="#4d4d4d"/><path d="M1903 64H1915V77H1903ZM1903 68H1915M1907 71H1911" fill="none" stroke="#ccc"/><circle cx="1914" cy="65" r="4" fill="#ddd"/>
<use href="#coll" x="1625" y="97"/><text x="1641" y="104" textLength="108">Scene Collection</text>
<path d="M1620 119L1625 124L1630 119" class="ic"/>
<rect x="1637" y="112" width="23" height="21" rx="4" fill="#4a4a4a"/><use href="#coll" x="1649" y="122"/>
<text x="1665" y="128" textLength="64" style="fill:#e8e8e8">Collection</text>
<rect x="1842" y="115" width="13" height="13" rx="2" fill="#e8e8e8"/><path d="M1845 121L1848 124L1853 118" stroke="#222" stroke-width="1.8" fill="none"/>
<use href="#eye" x="1872" y="121"/><use href="#cam" x="1897" y="122"/>
<rect x="1589" y="134" width="331" height="96" fill="#1c3359"/>
<rect x="1589" y="134" width="331" height="24" fill="#334d85"/>
<path d="M1624 140V224" stroke="#3d4f6e"/>
<use href="#mode" x="1601" y="146"/><use href="#mode" x="1601" y="170"/><use href="#mode" x="1601" y="194"/><use href="#mode" x="1601" y="218"/>
<use href="#rt" x="1648" y="146"/><use href="#rt" x="1648" y="170"/><use href="#rt" x="1648" y="194"/><use href="#rt" x="1648" y="218"/>
<rect x="1661" y="136" width="24" height="21" rx="4" fill="#5e76a6" opacity=".7"/>
<use href="#tri" x="1673" y="146"/><use href="#tri" x="1673" y="170"/><use href="#tri" x="1673" y="194"/><use href="#tri" x="1673" y="218"/>
<text x="1689" y="152" textLength="139" style="fill:#e8963c">non-tapered-I-beam</text>
<text x="1689" y="176" textLength="141" style="fill:#c9752b">non-tapered-T-beam</text>
<text x="1689" y="200" textLength="106" style="fill:#c9752b">tapered-I-beam</text>
<text x="1689" y="224" textLength="108" style="fill:#c9752b">tapered-T-beam</text>
<g fill="none" stroke="#17a08c" stroke-width="1.2"><path d="M1836 184H1824L1820 188V202L1824 205H1836" fill="#1d4050"/><path d="M1825 187L1831 196V204M1825 187H1836M1831 196H1836" stroke-width="1.5"/><path d="M1836 208H1827L1823 212V226L1827 229H1836" fill="#1d4050"/><path d="M1828 211L1834 220V228M1828 211H1836" stroke-width="1.5"/></g>
<use href="#eye" x="1872" y="146"/><use href="#cam" x="1897" y="146"/><use href="#eye" x="1872" y="170"/><use href="#cam" x="1897" y="170"/><use href="#eye" x="1872" y="194"/><use href="#cam" x="1897" y="194"/><use href="#eye" x="1872" y="218"/><use href="#cam" x="1897" y="218"/>
<rect x="1598" y="260" width="274" height="3" rx="1.5" fill="#3a3a3a"/>

<!-- properties -->
<rect x="1589" y="269" width="331" height="745" rx="8" fill="#2c2c2c"/>
<rect x="1589" y="300" width="33" height="714" fill="#1e1e1e"/>
<rect x="1591" y="733" width="31" height="31" rx="3" fill="#2e2e2e"/>
<rect x="1599" y="273" width="36" height="22" rx="4" fill="#222" stroke="#333"/><rect x="1604" y="276" width="16" height="7" rx="3.5" fill="#ddd"/><rect x="1604" y="285" width="16" height="7" rx="3.5" fill="#ddd"/><circle cx="1608" cy="288" r="2.3" fill="#222"/><circle cx="1616" cy="279.5" r="2.3" fill="#222"/><use href="#dn" x="1628" y="285"/>
<rect x="1680" y="273" width="140" height="22" rx="5" fill="#1d1d1d" stroke="#2c2c2c"/><use href="#search" x="1693" y="284"/>
<text x="1710" y="288" style="fill:#5e5e5e">Search</text>
<rect x="1887" y="273" width="22" height="22" rx="4" fill="#222" stroke="#333"/><use href="#dn" x="1898" y="285"/>
<!-- breadcrumbs -->
<rect x="1639" y="317" width="9" height="9" fill="#ddd"/><path d="M1635 318V313H1640M1647 313H1652V318M1635 325V330H1640M1647 330H1652V325" fill="none" stroke="#888" stroke-width="1.2"/>
<text x="1663" y="325" textLength="71">non-tape...</text><use href="#rt" x="1750" y="321"/><use href="#meshd" x="1775" y="321"/>
<text x="1795" y="325" textLength="71">non-tape...</text><use href="#pin" x="1899" y="321"/>
<rect x="1632" y="352" width="278" height="23" rx="4" fill="#1d1d1d"/>
<path d="M1632 356Q1632 352 1636 352H1668V375H1636Q1632 375 1632 371Z" fill="#2a2a2a"/><use href="#meshd" x="1645" y="363"/><use href="#dn" x="1661" y="364"/>
<text x="1678" y="367" textLength="139">non-tapered-I-beam</text>
<path d="M1886 352H1906Q1910 352 1910 356V371Q1910 375 1906 375H1886Z" fill="#555"/><path d="M1891 358L1898 356L1905 358V365Q1904 370 1898 372Q1892 370 1891 365Z" fill="none" stroke="#8a8a8a" stroke-width="1.3"/>
<!-- property tabs -->
<g transform="translate(1606,325)"><path d="M-4 -8V0M-6 3H-1V9H-6ZM4 -9Q8 -7 6 -4L5 -2V9M2 -9Q0 -7 3 -3" stroke="#ddd" fill="none" stroke-width="1.6"/></g>
<g transform="translate(1606,368)"><rect x="-8" y="-5" width="16" height="12" fill="none" stroke="#ddd" stroke-width="1.6"/><rect x="2" y="-2" width="4" height="7" fill="#ddd"/><path d="M-4 -8H3" stroke="#ddd" stroke-width="1.8"/></g>
<g transform="translate(1606,400)"><rect x="-8" y="-7" width="16" height="5" fill="#ddd"/><path d="M-8 -2H8V7H-8Z" fill="none" stroke="#ddd" stroke-width="1.6"/></g>
<use href="#vlayer" x="1606" y="433"/>
<g transform="translate(1606,467)"><path d="M-2 -7L3 3Q-2 7 -7 4Q-9 0 -2 -7Z" fill="#ddd"/><circle cx="5" cy="-6" r="2" fill="#ddd"/><circle cx="4" cy="3" r="4" fill="none" stroke="#ddd"/></g>
<g transform="translate(1606,500)"><circle r="8" fill="#c95052"/><path d="M-7 -2Q-2 -6 0 -2Q3 2 -2 7M-3 -8Q2 -4 6 -6" stroke="#2a2a2a" fill="none" stroke-width="1.6"/></g>
<g transform="translate(1606,542)"><rect x="-8" y="-7" width="16" height="4" fill="#ddd"/><path d="M-7 -3V7H7V-3M-2 0H2" fill="none" stroke="#ddd" stroke-width="1.5"/></g>
<g transform="translate(1606,584)"><rect x="-5" y="-5" width="10" height="10" fill="#de8a3e"/><path d="M-8 -4V-8H-4M4 -8H8V-4M-8 4V8H-4M4 8H8V4" fill="none" stroke="#a06a34" stroke-width="1.3"/></g>
<g transform="translate(1606,616)"><path d="M-8 7L1 -1Q-1 -6 4 -8L5 -4H8Q8 2 3 2L-5 9Z" fill="#5d87d0" stroke="#5d87d0"/></g>
<g transform="translate(1606,650)" stroke="#5d87d0" fill="#5d87d0"><path d="M-6 -5V7M-6 -5L6 6M-6 -5H8" stroke-width="1.2"/><circle cx="-6" cy="-5" r="2.6"/><circle cx="-6" cy="7" r="1.5"/><circle cx="6" cy="6" r="2"/></g>
<g transform="translate(1606,682)"><ellipse rx="8" ry="6" fill="none" stroke="#5d87d0" stroke-width="1.3"/><circle r="3.4" fill="#5d87d0"/><circle cx="7" cy="-5" r="2" fill="#5d87d0"/></g>
<g transform="translate(1606,716)"><path d="M-8 2Q-8 -6 6 -8Q10 -2 3 6Q-6 10 -8 2Z" fill="none" stroke="#5d87d0" stroke-width="1.5"/><circle cx="-1" cy="1" r="4" fill="none" stroke="#5d87d0" stroke-width="2"/></g>
<g transform="translate(1606,749)"><path d="M-7 -5H7L0 7Z" fill="none" stroke="#22d3a2" stroke-width="1.6"/><rect x="-9" y="-7" width="4" height="4" fill="#1e1e1e" stroke="#22d3a2"/><rect x="5" y="-7" width="4" height="4" fill="#1e1e1e" stroke="#22d3a2"/><rect x="-2" y="5" width="4" height="4" fill="#1e1e1e" stroke="#22d3a2"/></g>
<g transform="translate(1606,782)"><circle r="8" fill="#c95052"/><path d="M0 -8A8 8 0 0 1 8 0H0V8A8 8 0 0 1 -8 0H0Z" fill="#f2b8b8" opacity=".45"/><path d="M-8 0H8" stroke="#222"/></g>
<!-- panels -->
<g fill="#383838">
<rect x="1631" y="386" width="278" height="141" rx="5"/>
<rect x="1631" y="530" width="278" height="170" rx="5"/>
<rect x="1631" y="703" width="278" height="30" rx="5"/>
<rect x="1631" y="735.5" width="278" height="30" rx="5"/>
<rect x="1631" y="767.5" width="278" height="30" rx="5"/>
<rect x="1631" y="799.5" width="278" height="30" rx="5"/>
<rect x="1631" y="831.5" width="278" height="30" rx="5"/>
<rect x="1631" y="863.5" width="278" height="30" rx="5"/>
<rect x="1631" y="895.5" width="278" height="30" rx="5"/>
<rect x="1631" y="927.5" width="278" height="30" rx="5"/>
</g>
<use href="#dnb" x="1647" y="401"/><text x="1657" y="406" textLength="90">Vertex Groups</text><use href="#dots" x="1884" y="398"/>
<rect x="1641" y="427" width="225" height="91" rx="3" fill="#2a2a2a"/>
<use href="#plist" x="1653" y="504"/>
<path d="M1881 427H1895Q1899 427 1899 431V449H1877V431Q1877 427 1881 427Z" fill="#575757"/><path d="M1888 433V444M1882.5 438.5H1893.5" stroke="#ddd" stroke-width="1.6"/>
<path d="M1877 449H1899V468Q1899 472 1895 472H1881Q1877 472 1877 468Z" fill="#464646"/><path d="M1883 461H1893" stroke="#5e5e5e" stroke-width="1.6"/>
<rect x="1877" y="481" width="22" height="22" rx="4" fill="#262626"/><use href="#dnb" x="1888" y="491"/>
<use href="#dnb" x="1647" y="545"/><text x="1657" y="550" textLength="73">Shape Keys</text><use href="#dots" x="1884" y="542"/>
<rect x="1641" y="570" width="225" height="92" rx="3" fill="#2a2a2a"/>
<use href="#plist" x="1653" y="648"/>
<path d="M1881 570H1895Q1899 570 1899 574V592H1877V574Q1877 570 1881 570Z" fill="#464646"/><path d="M1888 576V587M1882.5 581.5H1893.5" stroke="#5e5e5e" stroke-width="1.6"/>
<path d="M1877 592H1899V612Q1899 616 1895 616H1881Q1877 616 1877 612Z" fill="#464646"/><path d="M1883 605H1893" stroke="#5e5e5e" stroke-width="1.6"/>
<rect x="1877" y="625" width="22" height="22" rx="4" fill="#262626"/><use href="#dnb" x="1888" y="635"/>
<rect x="1641" y="672" width="16" height="16" rx="3" fill="#555"/>
<text x="1661" y="684" textLength="108">Add Rest Position</text>
<use href="#rt" x="1646" y="718"/><text x="1657" y="723" textLength="56">UV Maps</text><use href="#dots" x="1884" y="714"/>
<use href="#rt" x="1646" y="750.5"/><text x="1657" y="755" textLength="98">Color Attributes</text><use href="#dots" x="1884" y="746"/>
<use href="#rt" x="1646" y="782.5"/><text x="1657" y="787" textLength="59">Attributes</text><use href="#dots" x="1884" y="778"/>
<use href="#rt" x="1646" y="814.5"/><text x="1657" y="819" textLength="90">Texture Space</text><use href="#dots" x="1884" y="810"/>
<use href="#rt" x="1646" y="846.5"/><text x="1657" y="851" textLength="50">Remesh</text><use href="#dots" x="1884" y="842"/>
<use href="#rt" x="1646" y="878.5"/><text x="1657" y="883" textLength="93">Geometry Data</text><use href="#dots" x="1884" y="874"/>
<use href="#rt" x="1646" y="910.5"/><text x="1657" y="915" textLength="61">Animation</text><use href="#dots" x="1884" y="906"/>
<use href="#rt" x="1646" y="942.5"/><text x="1657" y="947" textLength="116">Custom Properties</text><use href="#dots" x="1884" y="938"/>

<!-- status bar -->
<rect y="1015" width="1920" height="25" fill="#161616"/>
<text x="833" y="1031" textLength="1000" class="sm" style="fill:#a6a6a6;letter-spacing:.2px">non-tapered-I-beam | Verts:1,064/1,064 | Edges:2,112/2,112 | Faces:1,056/1,056 | Tris:2,112 | Objects:4/4 | Memory: 27.3 MiB | VRAM: 1.5/12.0 GiB |</text>
<g fill="none" stroke="#a0a0a0" stroke-width="1"><circle cx="1846" cy="1026" r="7.5"/><ellipse cx="1846" cy="1026" rx="3.5" ry="7.5"/><path d="M1839 1023H1853M1839 1029H1853"/></g>
<text x="1853" y="1036" style="font-size:9px;fill:#a6a6a6;letter-spacing:0">3</text>
<text x="1866" y="1031" textLength="39" class="sm" style="fill:#a6a6a6">| 4.5.0</text>
</svg>
</body></html>
